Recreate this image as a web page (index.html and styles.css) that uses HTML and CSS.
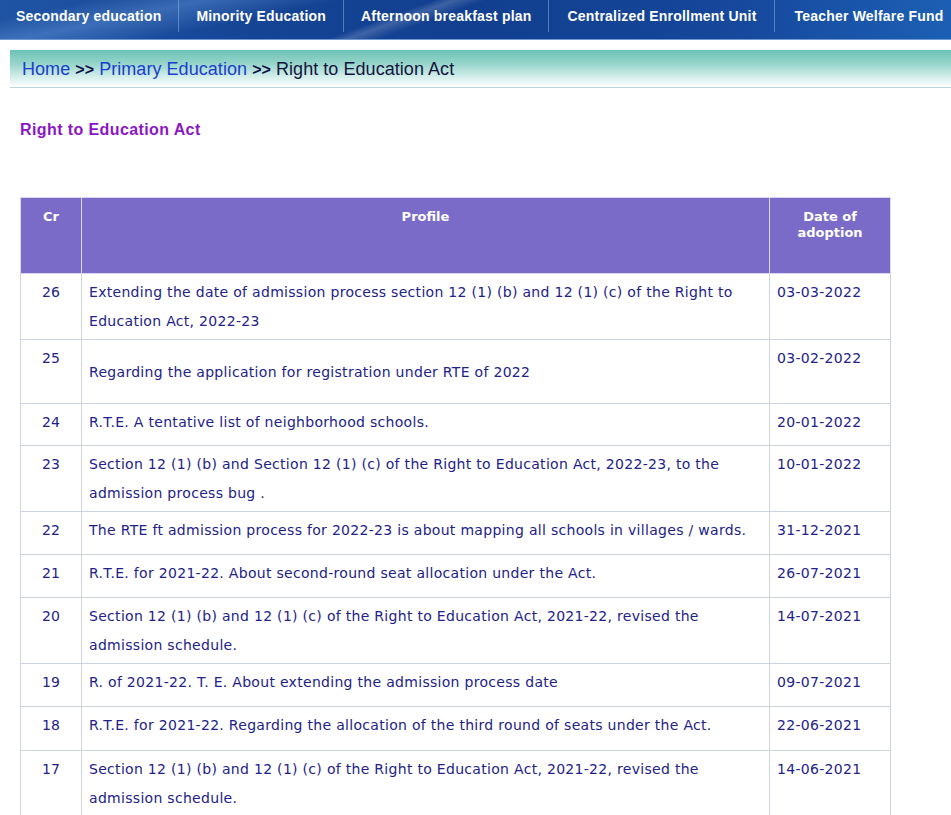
FILE: index.html
```html
<!DOCTYPE html>
<html lang="en">
<head>
<meta charset="utf-8">
<title>Right to Education Act</title>
<link rel="stylesheet" href="styles.css">
</head>
<body>
<nav class="topnav">
  <a class="nav-item" href="#">Secondary education</a>
  <a class="nav-item" href="#">Minority Education</a>
  <a class="nav-item" href="#">Afternoon breakfast plan</a>
  <a class="nav-item" href="#">Centralized Enrollment Unit</a>
  <a class="nav-item" href="#">Teacher Welfare Fund</a>
</nav>
<div class="crumbbar">
  <div class="crumbs"><a href="#" class="crumb-link">Home</a> <span class="sep">&gt;&gt;</span> <a href="#" class="crumb-link">Primary Education</a> <span class="sep">&gt;&gt;</span> <span class="crumb-current">Right to Education Act</span></div>
</div>
<main class="content">
  <h1 class="page-title">Right to Education Act</h1>
  <table class="acts">
    <thead>
      <tr>
        <th class="c-cr">Cr</th>
        <th class="c-profile">Profile</th>
        <th class="c-date">Date of<br>adoption</th>
      </tr>
    </thead>
    <tbody>
      <tr class="two"><td class="c-cr">26</td><td class="c-profile"><a href="#">Extending the date of admission process section 12 (1) (b) and 12 (1) (c) of the Right to Education Act, 2022-23</a></td><td class="c-date">03-03-2022</td></tr>
      <tr class="tall"><td class="c-cr">25</td><td class="c-profile shifted"><a href="#">Regarding the application for registration under RTE of 2022</a></td><td class="c-date">03-02-2022</td></tr>
      <tr class="short"><td class="c-cr">24</td><td class="c-profile"><a href="#">R.T.E. A tentative list of neighborhood schools.</a></td><td class="c-date">20-01-2022</td></tr>
      <tr class="two"><td class="c-cr">23</td><td class="c-profile"><a href="#">Section 12 (1) (b) and Section 12 (1) (c) of the Right to Education Act, 2022-23, to the admission process bug .</a></td><td class="c-date">10-01-2022</td></tr>
      <tr><td class="c-cr">22</td><td class="c-profile"><a href="#">The RTE ft admission process for 2022-23 is about mapping all schools in villages / wards.</a></td><td class="c-date">31-12-2021</td></tr>
      <tr><td class="c-cr">21</td><td class="c-profile"><a href="#">R.T.E. for 2021-22. About second-round seat allocation under the Act.</a></td><td class="c-date">26-07-2021</td></tr>
      <tr class="two"><td class="c-cr">20</td><td class="c-profile"><a href="#">Section 12 (1) (b) and 12 (1) (c) of the Right to Education Act, 2021-22, revised the admission schedule.</a></td><td class="c-date">14-07-2021</td></tr>
      <tr><td class="c-cr">19</td><td class="c-profile"><a href="#">R. of 2021-22. T. E. About extending the admission process date</a></td><td class="c-date">09-07-2021</td></tr>
      <tr class="wide"><td class="c-cr">18</td><td class="c-profile"><a href="#">R.T.E. for 2021-22. Regarding the allocation of the third round of seats under the Act.</a></td><td class="c-date">22-06-2021</td></tr>
      <tr class="two"><td class="c-cr">17</td><td class="c-profile"><a href="#">Section 12 (1) (b) and 12 (1) (c) of the Right to Education Act, 2021-22, revised the admission schedule.</a></td><td class="c-date">14-06-2021</td></tr>
    </tbody>
  </table>
</main>
</body>
</html>
```
FILE: styles.css
```css
html, body {
  margin: 0;
  padding: 0;
  background: #ffffff;
}
body {
  font-family: "Liberation Sans", Arial, sans-serif;
  overflow: hidden;
}
a { text-decoration: none; }

.topnav {
  height: 39px;
  display: flex;
  align-items: flex-start;
  border-bottom: 1px solid #6f9ad4;
  background:
    linear-gradient(160deg, rgba(255,255,255,0) 0%, rgba(255,255,255,0) 41%, rgba(255,255,255,0.18) 43%, rgba(255,255,255,0) 46%, rgba(255,255,255,0) 100%),
    linear-gradient(168deg, rgba(255,255,255,0) 0%, rgba(255,255,255,0) 8%, rgba(120,170,230,0.35) 18%, rgba(255,255,255,0) 30%, rgba(255,255,255,0) 100%),
    linear-gradient(90deg, #1f54a4 0%, #164596 25%, #123f8f 50%, #15469a 75%, #1c5fb4 100%);
}
.nav-item {
  color: #ffffff;
  font-weight: bold;
  font-size: 14px;
  letter-spacing: 0.2px;
  line-height: 32px;
  height: 32px;
  padding: 0 18px 0 18px;
  border-right: 1px solid rgba(140,175,225,0.55);
  white-space: nowrap;
}
.nav-item:nth-child(1) { padding-left: 16px; padding-right: 17px; }
.nav-item:nth-child(2) { padding-left: 17px; padding-right: 17px; }
.nav-item:nth-child(3) { padding-left: 17px; padding-right: 16px; }
.nav-item:nth-child(4) { padding-left: 19px; padding-right: 17px; }
.nav-item:last-child { border-right: none; padding-left: 20px; }

.crumbbar {
  margin: 10px 0 0 10px;
  border-bottom: 1px solid #bcd6df;
  padding-bottom: 2px;
}
.crumbs {
  height: 35px;
  padding-left: 12px;
  line-height: 39px;
  font-size: 18px;
  letter-spacing: 0.05px;
  background: linear-gradient(180deg, #6cc1b5 0%, #98d5cb 40%, #d6efeb 78%, #f3fbfa 100%);
  white-space: nowrap;
}
.crumb-link { color: #1b3ed0; }
.sep { color: #10104a; font-size: 16px; font-weight: bold; }
.crumb-current { color: #14143f; }

.content {
  padding: 0 0 0 20px;
}
.page-title {
  margin: 32px 0 0 0;
  font-size: 16px;
  letter-spacing: 0.4px;
  line-height: 20px;
  font-weight: bold;
  color: #8c16c6;
}

.acts {
  margin-top: 57px;
  border-collapse: collapse;
  width: 871px;
  table-layout: fixed;
  font-family: "DejaVu Sans", Verdana, sans-serif;
  font-size: 14px;
  letter-spacing: 0.3px;
  border: 1px solid #cdd4de;
}
.acts th {
  background: #7b6bc8;
  color: #ffffff;
  font-size: 13px;
  letter-spacing: 0;
  font-weight: bold;
  line-height: 16px;
  height: 76px;
  padding: 11px 6px 0;
  vertical-align: top;
  text-align: center;
  border: 1px solid #d9d6ef;
  box-sizing: border-box;
}
.acts th.c-cr { width: 61px; }
.acts th.c-date { width: 121px; }
.acts td {
  border: 1px solid #cdd4de;
  vertical-align: top;
  padding: 4px 7px 2px;
  line-height: 29px;
  height: 43px;
  box-sizing: border-box;
  color: #22228a;
}
.acts td a { color: #22228a; }
.acts td.c-cr { text-align: center; letter-spacing: 0; }
.acts tr.two td { height: 66px; }
.acts tr.tall td { height: 64px; }
.acts tr.short td { height: 42px; }
.acts tr.wide td { height: 44px; }
.acts td.shifted { padding-top: 18px; }
```
